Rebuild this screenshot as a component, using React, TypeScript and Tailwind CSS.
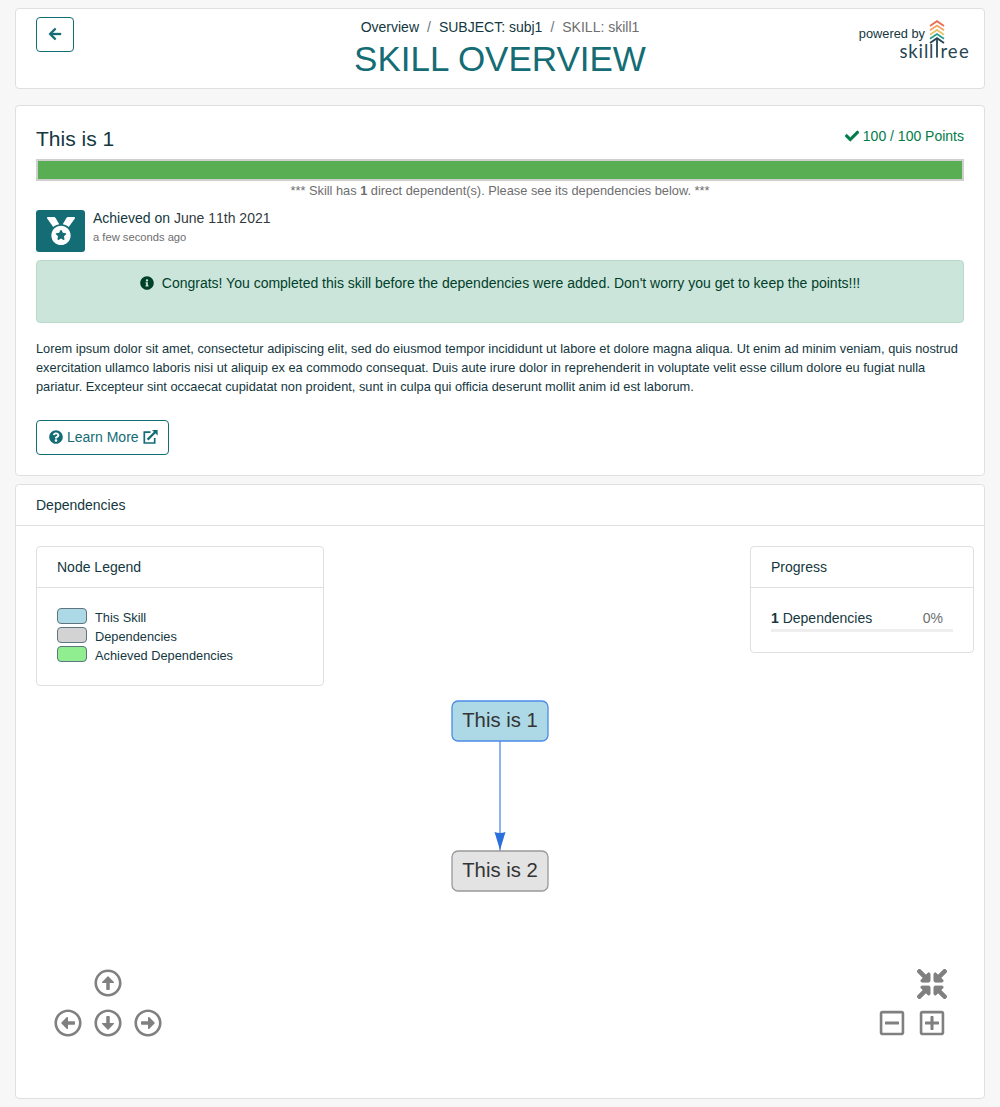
import React from "react";
import {
  FaArrowLeft,
  FaCheck,
  FaCompressArrowsAlt,
  FaInfoCircle,
  FaMedal,
  FaQuestionCircle,
  FaRegArrowAltCircleDown,
  FaRegArrowAltCircleLeft,
  FaRegArrowAltCircleRight,
  FaRegArrowAltCircleUp,
  FaRegMinusSquare,
  FaRegPlusSquare,
} from "react-icons/fa";

const card = "rounded border border-[#dfdfdf] bg-white";

const legend = [
  { label: "This Skill", swatch: "bg-[#add8e6]" },
  { label: "Dependencies", swatch: "bg-[#d3d3d3]" },
  { label: "Achieved Dependencies", swatch: "bg-[#90ee90]" },
];

function SkillTreeLogo() {
  return (
    <svg width="72" height="43" viewBox="0 0 72 43" fill="none">
      <g strokeWidth="1.8">
        <path d="M31 9L38 4.2L45 9" stroke="#e76f51" />
        <path d="M31 13.3L38 8.5L45 13.3" stroke="#f4a261" />
        <path d="M31 17.7L38 12.9L45 17.7" stroke="#e9c46a" />
        <path d="M31 21.8L38 17L45 21.8" stroke="#2a9d8f" />
        <path d="M31 26L38 21.2L45 26" stroke="#264653" />
        <path d="M38 21.5V40.5" stroke="#264653" />
      </g>
      <g fill="#264653" fontFamily="Lato, sans-serif" fontSize="18.5">
        <text x="0.6 9.2 19.6 24.9 30" y="40.5">skill</text>
        <text x="41.6 48.8 60" y="40.5">ree</text>
      </g>
    </svg>
  );
}

function Header() {
  return (
    <header className={`${card} flex h-[81px] justify-between px-5 pt-2`}>
      <div className="flex-1">
        <button className="flex h-[35px] w-[38px] items-center justify-center rounded border border-[#146c75] text-[#146c75]">
          <FaArrowLeft size={14} className="mb-px [stroke-width:10]" />
        </button>
      </div>
      <div className="flex flex-col items-center">
        <nav className="flex h-[21px] items-center gap-2">
          <span>Overview</span>
          <span className="text-[#6c757d]">/</span>
          <span>SUBJECT: subj1</span>
          <span className="text-[#6c757d]">/</span>
          <span className="text-[#6e6e6e]">SKILL: skill1</span>
        </nav>
        <h1 className="text-[35px] leading-[42px] text-[#146c75]">SKILL OVERVIEW</h1>
      </div>
      <div className="flex flex-1 justify-end">
        <span className="pt-[7px] text-[12.8px] leading-[19px]">powered by</span>
        <div className="-mr-[7px] -ml-[26px] w-[72px]">
          <SkillTreeLogo />
        </div>
      </div>
    </header>
  );
}

function SkillDetails() {
  return (
    <section className={`${card} mt-4 h-[371px] px-5 pt-5`}>
      <div className="flex h-[33px] justify-between">
        <h2 className="text-[21px] leading-[26px]">This is 1</h2>
        <div className="flex h-[21px] items-center gap-1 text-[#007c49]">
          <FaCheck size={14} className="mb-0.5 [stroke-width:16]" />
          <span>100 / 100 Points</span>
        </div>
      </div>
      <div className="h-[22px] border-2 border-[#cfcfcf] bg-[#59ad52]" />
      <p className="text-center text-[12.8px] leading-[19px] text-[#6e6e6e]">
        *** Skill has <b>1</b> direct dependent(s). Please see its dependencies below. ***
      </p>
      <div className="mt-[10px] flex gap-2">
        <div className="flex h-[42px] w-[49px] items-center justify-center rounded-[3px] bg-[#146c75] text-white">
          <FaMedal size={28} />
        </div>
        <div className="-mt-0.5">
          <div className="leading-[21px]">
            Achieved on <span className="text-[#333a40] [font-kerning:none]">June 11th 2021</span>
          </div>
          <div className="text-[11.2px] leading-[17px] text-[#6e6e6e]">a few seconds ago</div>
        </div>
      </div>
      <div className="mt-2 flex h-[63px] justify-center gap-2 rounded border border-[#b8dacb] bg-[#cce5db] pt-3 text-[#00402a]">
        <FaInfoCircle size={14} className="mt-[3px]" />
        <span className="leading-[21px]">
          Congrats! You completed this skill before the dependencies were added. Don't worry you get to keep the points!!!
        </span>
      </div>
      <p className="mt-4 text-[12.8px] leading-[19px]">
        Lorem ipsum dolor sit amet, consectetur adipiscing elit, sed do eiusmod tempor incididunt ut labore et dolore
        magna aliqua. Ut enim ad minim veniam, quis nostrud exercitation ullamco laboris nisi ut aliquip ex ea commodo
        consequat. Duis aute irure dolor in reprehenderit in voluptate velit esse cillum dolore eu fugiat nulla
        pariatur. Excepteur sint occaecat cupidatat non proident, sunt in culpa qui officia deserunt mollit anim id est
        laborum.
      </p>
      <button className="mt-6 flex h-[35px] w-[133px] items-center gap-1 rounded border border-[#146c75] pl-3 text-[#146c75]">
        <FaQuestionCircle size={14} className="mb-px" />
        <span>Learn More</span>
        {/* Outlined box with an arrow leaving its top right corner */}
        <svg width="15" height="14" viewBox="0 0 15 14" fill="none" stroke="currentColor" className="mb-px">
          <path d="M7.5 2.2H1.3V13H11.7V8" strokeWidth="1.7" />
          <path d="M4.6 9.6L12 2.2" strokeWidth="2.2" />
          <path d="M9 0H14.6V5.6Z" fill="currentColor" stroke="none" />
        </svg>
      </button>
    </section>
  );
}

function Graph() {
  return (
    <svg className="absolute left-[414px] top-[164px]" width="140" height="220" viewBox="0 0 140 220">
      <path d="M70 50V170" stroke="#2b6fdd" strokeOpacity="0.75" strokeWidth="1.4" />
      <path d="M64.5 142Q70 144 75.5 142L70 160Z" fill="#2b6fdd" />
      <rect x="22" y="11" width="96" height="40" rx="6" fill="#add8e6" stroke="#4b8be6" strokeWidth="1.3" />
      <rect x="22" y="161" width="96" height="40" rx="6" fill="#e3e3e3" stroke="#999" strokeWidth="1.3" />
      <g fontSize="20.3" fill="#343434" textAnchor="middle" fontFamily="Liberation Sans, sans-serif">
        <text x="70" y="37">This is 1</text>
        <text x="70" y="187">This is 2</text>
      </g>
    </svg>
  );
}

function Dependencies() {
  return (
    <section className={`${card} mt-2 h-[615px]`}>
      <h3 className="h-[41px] border-b border-[#dfdfdf] px-5 leading-[40px]">Dependencies</h3>
      <div className="relative flex h-[572px] flex-col justify-between pt-5 pb-[61px]">
        <Graph />
        <div className="flex items-start justify-between pl-5 pr-2.5">
          <div className={`${card} h-[140px] w-[288px]`}>
            <h4 className="h-[41px] border-b border-[#dfdfdf] px-5 leading-[40px]">Node Legend</h4>
            <ul className="px-5 pt-5">
              {legend.map((item) => (
                <li key={item.label} className="flex h-[19px] gap-2">
                  <span className={`${item.swatch} h-4 w-[30px] rounded border border-[#5f7580]`} />
                  <span className="text-[12.8px] leading-[20px]">{item.label}</span>
                </li>
              ))}
            </ul>
          </div>
          <div className={`${card} h-[107px] w-[224px]`}>
            <h4 className="h-[41px] border-b border-[#dfdfdf] px-5 leading-[40px]">Progress</h4>
            <div className="px-5 pt-5">
              <div className="flex h-[21px] justify-between pr-[10px] leading-[21px]">
                <span>
                  <b>1</b> Dependencies
                </span>
                <span className="text-[#6e6e6e]">0%</span>
              </div>
              <div className="h-[3px] bg-[#eeeeee]" />
            </div>
          </div>
        </div>
        <div className="flex items-end justify-between pl-[38px] pr-9 text-[#808080]">
          <div className="grid grid-cols-3 gap-x-3 gap-y-3">
            <FaRegArrowAltCircleUp size={28} className="col-start-2" />
            <FaRegArrowAltCircleLeft size={28} className="col-start-1" />
            <FaRegArrowAltCircleDown size={28} />
            <FaRegArrowAltCircleRight size={28} />
          </div>
          <div className="grid w-[72px] grid-cols-[32px_32px] items-center justify-items-center gap-x-2 gap-y-2.5">
            <FaCompressArrowsAlt size={30} className="col-start-2 [stroke-width:12]" />
            <FaRegMinusSquare size={28} />
            <FaRegPlusSquare size={28} />
          </div>
        </div>
      </div>
    </section>
  );
}

export default function App() {
  return (
    <main className="h-[1107px] bg-[#f7f7f7] px-[15px] pt-2 font-['Liberation_Sans',Arial,sans-serif] text-[14px] text-[#143740]">
      <Header />
      <SkillDetails />
      <Dependencies />
    </main>
  );
}
